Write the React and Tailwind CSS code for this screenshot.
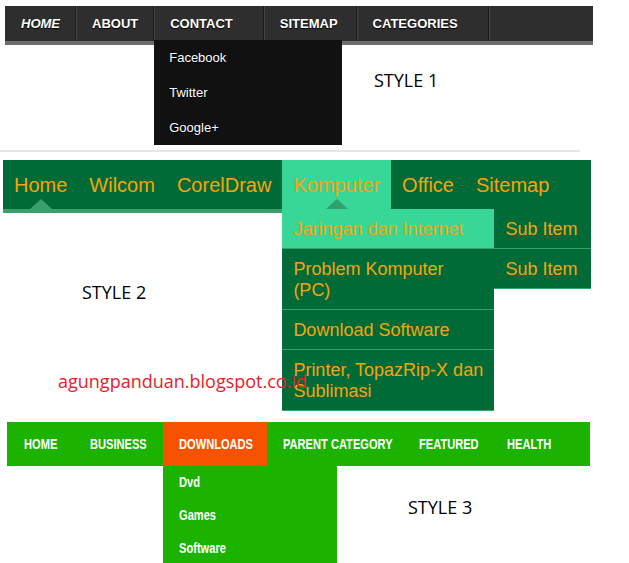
import React from "react";

const arial = { fontFamily: '"Liberation Sans", Arial, sans-serif' };

function StyleOne() {
  const items = [
    { label: "HOME", italic: true, pr: "pr-[15px]" },
    { label: "ABOUT", pr: "pr-[15px]" },
    { label: "CONTACT", sub: ["Facebook", "Twitter", "Google+"], pr: "pr-[30px]" },
    { label: "SITEMAP", pr: "pr-[18px]" },
    { label: "CATEGORIES", pr: "pr-[30px]" },
  ];

  return (
    <div className="h-[150px] pt-[6px]">
      <nav className="ml-[5px] flex h-[39px] w-[588px] border-b-4 border-[#6d6d6d] bg-[#2e2e2e] font-['Liberation_Sans',Arial,sans-serif]">
        {items.map((item) => (
          <div
            key={item.label}
            className={`relative flex h-[35px] items-center border-r border-[#1a1a1a] pl-4 text-[13px] font-bold text-white shadow-[1px_0_0_#454545] [text-shadow:0_1px_1px_#000] ${item.pr} ${
              item.italic ? "italic" : ""
            }`}
          >
            {item.label}
            {item.sub && (
              <ul className="absolute left-0 top-full z-10 -mt-px w-[188px] bg-[#111111]">
                {item.sub.map((s) => (
                  <li
                    key={s}
                    className="flex h-[35px] items-center px-[15px] text-[13px] font-normal not-italic text-white"
                  >
                    {s}
                  </li>
                ))}
              </ul>
            )}
          </div>
        ))}
      </nav>
      <p className="ml-[374px] mt-[23px] text-[18px] leading-6 text-black font-['Open_Sans',sans-serif]">
        STYLE 1
      </p>
    </div>
  );
}

function StyleTwo() {
  const items = ["Home", "Wilcom", "CorelDraw", "Komputer", "Office", "Sitemap"];
  const drop = [
    { label: "Jaringan dan Internet", active: true },
    { label: "Problem Komputer (PC)" },
    { label: "Download Software" },
    { label: "Printer, TopazRip-X dan Sublimasi" },
  ];

  return (
    <div className="h-[268px] pt-[8px]" style={arial}>
      <nav className="ml-[3px] flex h-[53px] w-[588px] border-b-4 border-[#3a9f6d] bg-[#006b36]">
        {items.map((item) => {
          const active = item === "Komputer";
          return (
            <div
              key={item}
              className={`relative flex h-[49px] items-center px-[11px] text-[20px] leading-none text-[#f7a30c] ${
                active ? "bg-[#38d697]" : ""
              }`}
            >
              {item}
              {(item === "Home" || active) && (
                <span
                  className={`absolute bottom-0 left-1/2 h-0 w-0 -translate-x-1/2 border-x-[11px] border-b-[10px] border-x-transparent ${
                    active ? "border-b-[#31a06c]" : "border-b-[#3a9f6d]"
                  }`}
                />
              )}
              {active && (
                <ul className="absolute left-0 top-full z-10 w-[212px] bg-[#006b36]">
                  {drop.map((d) => (
                    <li
                      key={d.label}
                      className={`relative border-b border-[#33a26c] px-[11px] pb-[8px] pt-[10px] text-[18px] leading-[21px] text-[#f7a30c] ${
                        d.active ? "bg-[#38d697]" : ""
                      }`}
                    >
                      {d.label}
                      {d.active && (
                        <ul className="absolute left-full top-0 w-[97px] bg-[#006b36]">
                          <li className="border-b border-[#33a26c] px-[11px] pb-[8px] pt-[10px] text-[18px] leading-[21px]">
                            Sub Item
                          </li>
                          <li className="border-b border-[#33a26c] px-[11px] pb-[8px] pt-[10px] text-[18px] leading-[21px]">
                            Sub Item
                          </li>
                        </ul>
                      )}
                    </li>
                  ))}
                </ul>
              )}
            </div>
          );
        })}
      </nav>
      <p className="ml-[82px] mt-[67px] text-[18px] leading-6 text-black font-['Open_Sans',sans-serif]">
        STYLE 2
      </p>
    </div>
  );
}

// condensed headline look: no narrow font installed, so squeeze a bold sans
function Squeezed({ children }) {
  return (
    <span className="inline-block origin-left scale-x-[0.74] whitespace-nowrap">{children}</span>
  );
}

function StyleThree() {
  const items = [
    { label: "Home", w: "w-[66px]" },
    { label: "Business", w: "w-[89px]" },
    { label: "Downloads", w: "w-[104px]", active: true },
    { label: "Parent Category", w: "w-[136px]" },
    { label: "Featured", w: "w-[88px]" },
    { label: "Health", w: "w-[74px]" },
  ];
  const drop = ["Dvd", "Games", "Software"];

  return (
    <div className="pt-[2px] font-['Liberation_Sans',Arial,sans-serif]">
      <nav className="ml-[7px] flex h-[44px] w-[583px] bg-[#1bb300] pl-[1px]">
        {items.map((item) => (
          <div
            key={item.label}
            className={`relative flex h-[44px] shrink-0 items-center pl-4 text-[15px] font-bold uppercase text-white ${item.w} ${
              item.active ? "bg-[#f75200]" : ""
            }`}
          >
            <Squeezed>{item.label}</Squeezed>
            {item.active && (
              <ul className="absolute left-0 top-full z-10 w-[174px] bg-[#1bb300]">
                {drop.map((d) => (
                  <li
                    key={d}
                    className="flex h-[33px] items-center px-4 text-[15px] font-bold normal-case text-white"
                  >
                    <Squeezed>{d}</Squeezed>
                  </li>
                ))}
              </ul>
            )}
          </div>
        ))}
      </nav>
      <p className="ml-[408px] mt-[29px] text-[18px] leading-6 text-black font-['Open_Sans',sans-serif]">
        STYLE 3
      </p>
    </div>
  );
}

export default function App() {
  return (
    <div className="relative h-[563px] w-[629px] overflow-hidden bg-white">
      <StyleOne />
      <div className="h-[2px] w-[580px] bg-[#e6e6e6]" />
      <StyleTwo />
      <StyleThree />

      {/* watermark over the menus */}
      <span className="pointer-events-none absolute left-[58px] top-[369px] z-20 text-[18px] leading-6 text-[#e8202a] font-['Open_Sans',sans-serif]">
        agungpanduan.blogspot.co.id
      </span>
    </div>
  );
}
